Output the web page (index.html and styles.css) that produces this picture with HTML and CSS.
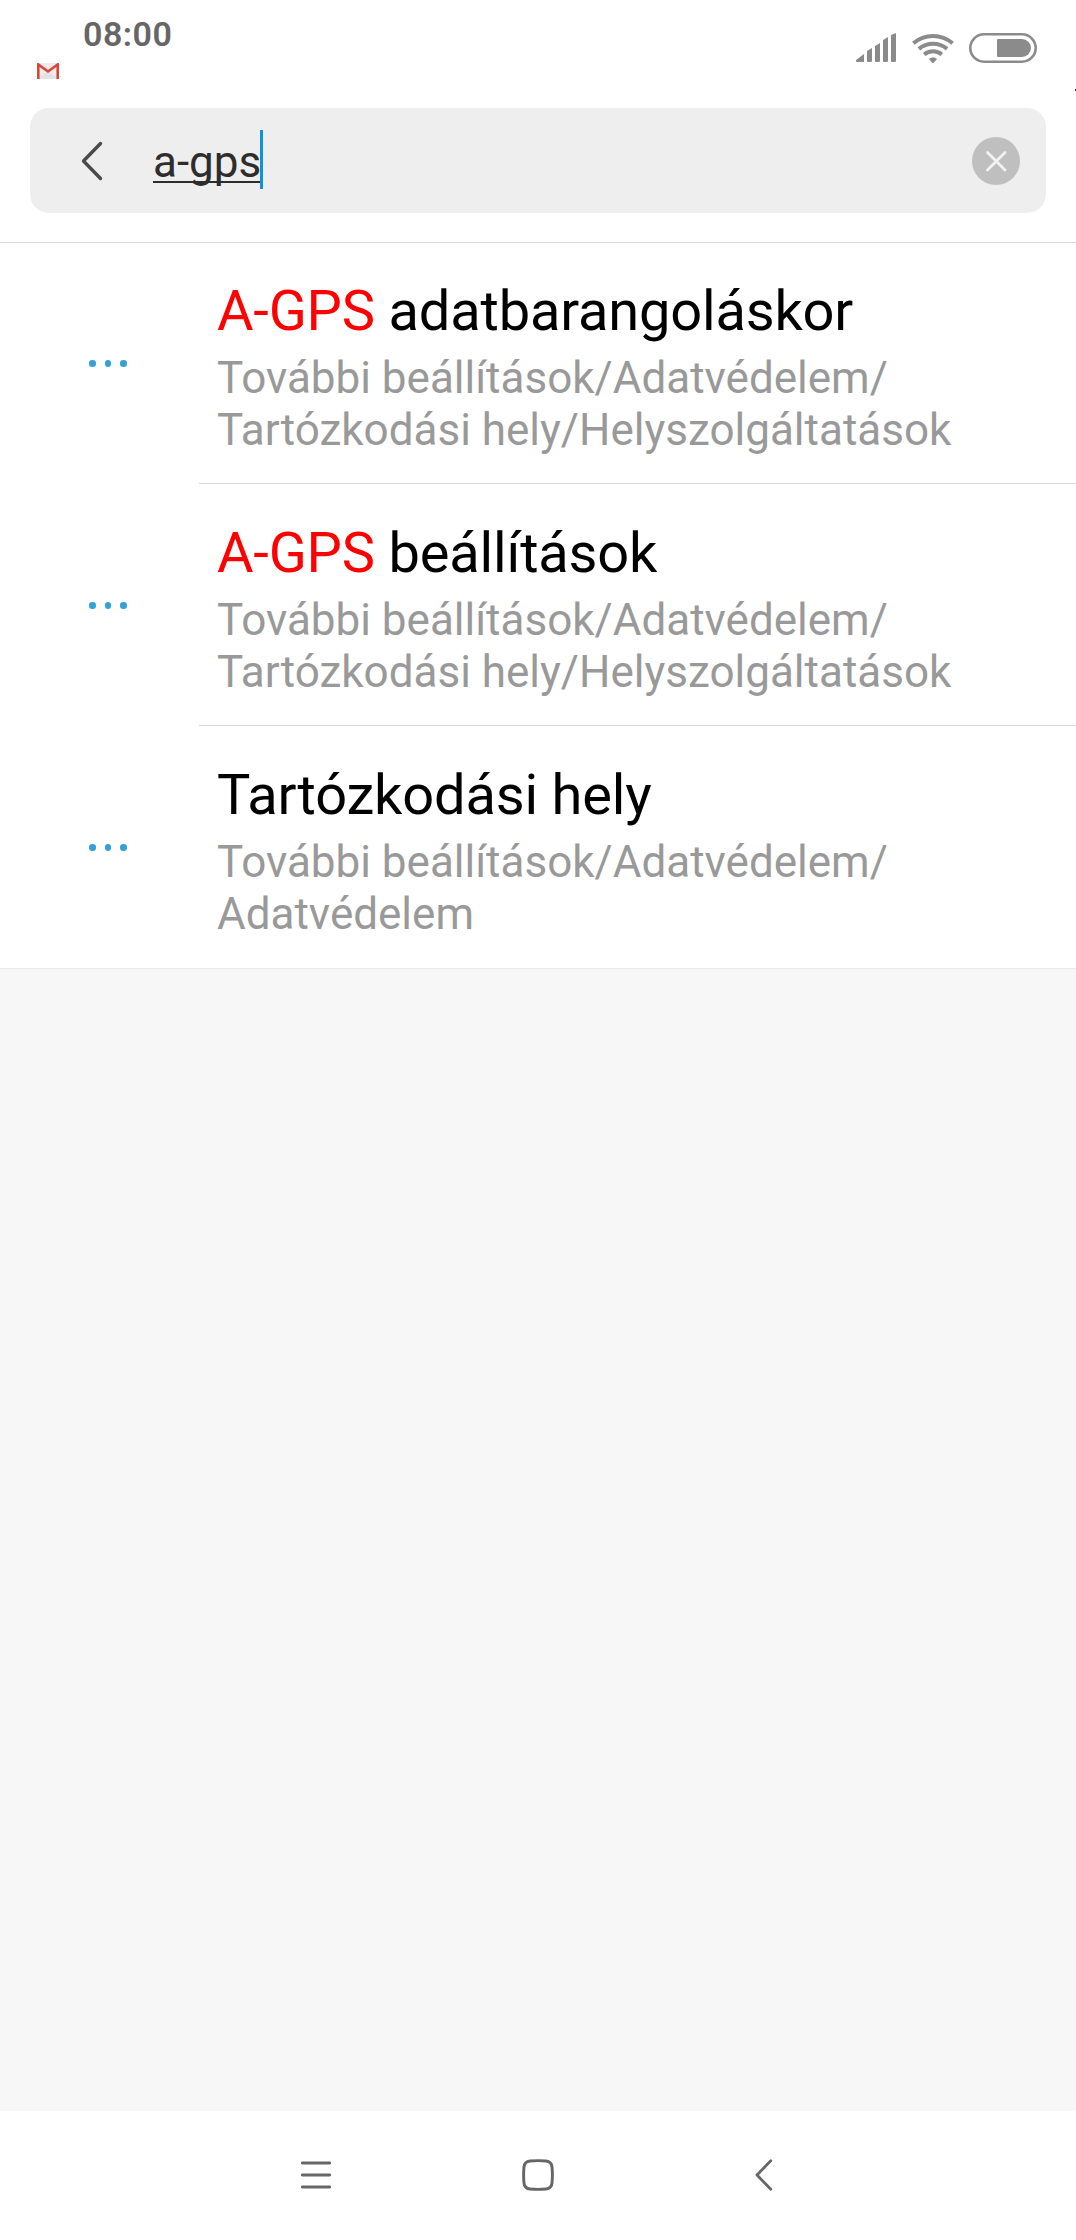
FILE: index.html
```html
<!DOCTYPE html>
<html lang="hu">
<head>
  <meta charset="UTF-8" />
  <meta name="viewport" content="width=device-width, initial-scale=1.0"/>
  <title>Beállítások keresése</title>
  <link rel="stylesheet" href="styles.css">
</head>
<body>
  <header class="statusBar">
    <div class="statusLeft">
      <div class="clock">08:00</div>
      <svg class="gmail" width="22" height="16" viewBox="0 0 22 16">
        <rect width="22" height="16" rx="1" fill="#ececec"/>
        <path d="M2 16L11 8l9 8" fill="#e2e2e2"/>
        <path d="M1.3 16V1.5L11 8.5l9.7-7V16" fill="none" stroke="#db4437" stroke-width="2.6"/>
      </svg>
    </div>
    <div class="statusIcons">
      <svg width="40" height="30" viewBox="0 0 40 30" fill="#8b8b8b">
        <path d="M0 27l8-6v8H1q-1 0-1-1zM11 18l5-3v13q0 1-1 1h-3q-1 0-1-1zM19 13l5-3v18q0 1-1 1h-3q-1 0-1-1zM27 7l5-3v24q0 1-1 1h-3q-1 0-1-1zM35 2l5-2v28q0 1-1 1h-3q-1 0-1-1z"/>
      </svg>
      <svg class="wifi" width="42" height="31" viewBox="0 0 42 31">
        <g fill="none" stroke="#8b8b8b" stroke-width="4">
          <path d="M1.4 10.3a30 30 0 0 1 39.2 0"/>
          <path d="M6.9 15.9a22 22 0 0 1 28.2 0"/>
          <path d="M12.2 21.5a13.5 13.5 0 0 1 17.6 0"/>
        </g>
        <path d="M17 26q4-3.5 8 0l-3 3.5q-1 1-2 0z" fill="#8b8b8b"/>
      </svg>
      <svg width="68" height="30" viewBox="0 0 68 30">
        <rect x="1.3" y="1.3" width="65.4" height="27.4" rx="13.7" fill="none" stroke="#8b8b8b" stroke-width="2.6"/>
        <path d="M29 6h24a9 9 0 0 1 0 18H29q-1 0-1-1V7q0-1 1-1z" fill="#8b8b8b"/>
      </svg>
    </div>
    <span class="edgeMark"></span>
  </header>

  <div class="searchWrap">
    <div class="searchBox">
      <svg class="back" width="22" height="40" viewBox="0 0 22 40">
        <path d="M19.5 2.5L2.5 20l17 17.5" fill="none" stroke="#4a4a4a" stroke-width="3.4" stroke-linecap="round" stroke-linejoin="round"/>
      </svg>
      <div class="query"><span class="queryText">a-gps</span><span class="caret"></span></div>
      <svg class="clear" width="48" height="48" viewBox="0 0 48 48">
        <circle cx="24" cy="24" r="24" fill="#bfbfbf"/>
        <path d="M15.5 15.5l17.5 17.5M33 15.5L15.5 33" stroke="#f2f2f2" stroke-width="2.8" stroke-linecap="round"/>
      </svg>
    </div>
  </div>

  <main class="results">
    <div class="result">
      <div class="dots"><i></i><i></i><i></i></div>
      <div class="resultText">
        <div class="resultTitle"><span class="match">A-GPS</span> adatbarangoláskor</div>
        <div class="resultPath">További beállítások/Adatvédelem/<br>Tartózkodási hely/Helyszolgáltatások</div>
      </div>
    </div>
    <div class="result">
      <div class="dots"><i></i><i></i><i></i></div>
      <div class="resultText">
        <div class="resultTitle"><span class="match">A-GPS</span> beállítások</div>
        <div class="resultPath">További beállítások/Adatvédelem/<br>Tartózkodási hely/Helyszolgáltatások</div>
      </div>
    </div>
    <div class="result">
      <div class="dots"><i></i><i></i><i></i></div>
      <div class="resultText">
        <div class="resultTitle">Tartózkodási hely</div>
        <div class="resultPath">További beállítások/Adatvédelem/<br>Adatvédelem</div>
      </div>
    </div>
  </main>

  <nav class="navBar">
    <svg width="32" height="32" viewBox="0 0 32 32">
      <path d="M2.3 4h27.4M2.3 16h27.4M2.3 28h27.4" stroke="#666" stroke-width="2.8" stroke-linecap="round"/>
    </svg>
    <svg width="32" height="32" viewBox="0 0 32 32">
      <path d="M8 2q8-.8 16 0q5.5 .5 6 6q.8 8 0 16q-.5 5.5-6 6q-8 .8-16 0q-5.500-.5-6-6q-.8-8 0-16q.5-5.500 6-6z" fill="none" stroke="#666" stroke-width="2.9"/>
    </svg>
    <svg width="32" height="32" viewBox="0 0 32 32">
      <path d="M20.8 1.7L7 16l13.800 14.3" fill="none" stroke="#666" stroke-width="2.8" stroke-linecap="round" stroke-linejoin="round"/>
    </svg>
  </nav>
</body>
</html>
```
FILE: styles.css
```css
body {
  margin: 0;
  height: 2240px;
  display: flex;
  flex-direction: column;
  font-family: Roboto, sans-serif;
  background: #f7f7f7;
  color: #000;
}

svg {
  display: block;
  flex-shrink: 0;
}

.statusBar {
  position: relative;
  height: 108px;
  box-sizing: border-box;
  display: flex;
  justify-content: space-between;
  padding: 0 39px 0 37px;
  background: #fff;
}

.clock {
  margin: 14px 0 9px 46px;
  font-size: 34px;
  line-height: 40px;
  font-weight: 600;
  letter-spacing: 0.5px;
  color: #666;
}

.statusIcons {
  display: flex;
  align-items: flex-start;
  padding-top: 33px;
}

.wifi {
  margin: 0 15px 0 16px;
}

/* stray pixel on the screen edge */
.edgeMark {
  position: absolute;
  right: 0;
  top: 89px;
  width: 1px;
  height: 2px;
  background: #222;
}

.searchWrap {
  padding: 0 30px 29px;
  background: #fff;
  border-bottom: 1px solid #d9d9d9;
}

.searchBox {
  height: 105px;
  box-sizing: border-box;
  display: flex;
  align-items: center;
  padding: 0 26px 0 51px;
  border-radius: 19px;
  background: #eee;
}

.query {
  flex: 1;
  display: flex;
  align-items: center;
  margin-left: 50px;
}

.queryText {
  font-size: 44px;
  line-height: 52px;
  margin-top: 3px;
  color: #2d2d2d;
  text-decoration: underline;
  text-decoration-thickness: 2px;
  text-decoration-skip-ink: none;
  text-underline-offset: 4px;
}

.caret {
  width: 3px;
  height: 59px;
  margin: 0 0 2px -1px;
  background: #0d92e0;
}

.results {
  background: #fff;
  border-bottom: 1px solid #e9e9e9;
}

.result {
  display: flex;
  height: 242px;
}

.result:last-child {
  height: 241px;
}

.dots {
  width: 199px;
  box-sizing: border-box;
  display: flex;
  gap: 9px;
  padding: 117px 0 0 89px;
}

.dots i {
  width: 6.6px;
  height: 6.6px;
  border-radius: 50%;
  background: #35a0d8;
}

.resultText {
  flex: 1;
  box-sizing: border-box;
  padding: 35px 0 0 18px;
}

.result:not(:last-child) .resultText {
  border-bottom: 1px solid #dadada;
  height: 241px;
}

.resultTitle {
  font-size: 56px;
  line-height: 66px;
  letter-spacing: -0.18px;
}

.match {
  color: #f00;
}

.resultPath {
  margin-top: 8px;
  font-size: 44px;
  line-height: 52px;
  color: #999;
}

.navBar {
  height: 129px;
  box-sizing: border-box;
  display: flex;
  gap: 190px;
  margin-top: auto;
  padding: 48px 0 0 300px;
  background: #fff;
}

.navBar svg:last-child {
  margin-left: 6px;
}
```
